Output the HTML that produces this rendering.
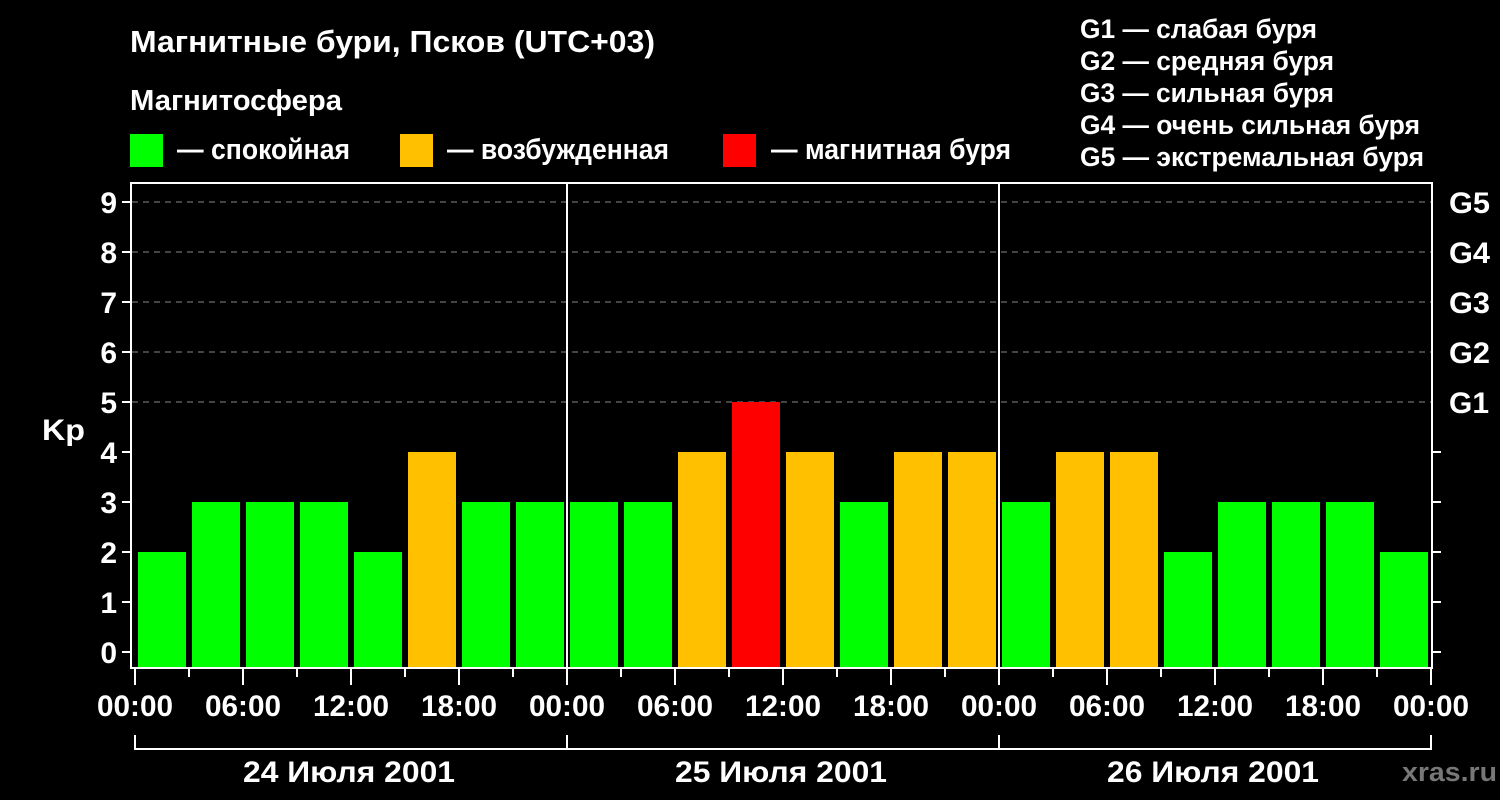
<!DOCTYPE html>
<html><head><meta charset="utf-8"><style>
html,body{margin:0;padding:0;background:#000;width:1500px;height:800px;overflow:hidden}
svg{display:block}
text{font-family:"Liberation Sans",sans-serif;font-weight:bold;fill:#fff}
</style></head><body>
<svg width="1500" height="800" viewBox="0 0 1500 800">
<text x="130" y="52" font-size="31" textLength="525" lengthAdjust="spacingAndGlyphs">Магнитные бури, Псков (UTC+03)</text>
<text x="130" y="110" font-size="29" textLength="212" lengthAdjust="spacingAndGlyphs">Магнитосфера</text>
<rect x="130" y="134" width="33" height="33" fill="#00ff00"/>
<text x="177" y="159" font-size="29" textLength="173" lengthAdjust="spacingAndGlyphs">— спокойная</text>
<rect x="400" y="134" width="33" height="33" fill="#ffc000"/>
<text x="447" y="159" font-size="29" textLength="222" lengthAdjust="spacingAndGlyphs">— возбужденная</text>
<rect x="723" y="134" width="33" height="33" fill="#ff0000"/>
<text x="771" y="159" font-size="29" textLength="240" lengthAdjust="spacingAndGlyphs">— магнитная буря</text>
<g font-size="27">
<text x="1080" y="38" textLength="237" lengthAdjust="spacingAndGlyphs">G1 — слабая буря</text>
<text x="1080" y="70" textLength="254" lengthAdjust="spacingAndGlyphs">G2 — средняя буря</text>
<text x="1080" y="102" textLength="254" lengthAdjust="spacingAndGlyphs">G3 — сильная буря</text>
<text x="1080" y="134" textLength="340" lengthAdjust="spacingAndGlyphs">G4 — очень сильная буря</text>
<text x="1080" y="166" textLength="344" lengthAdjust="spacingAndGlyphs">G5 — экстремальная буря</text>
</g>
<g stroke="#888" stroke-width="1" stroke-dasharray="6,5">
<line x1="132" y1="202" x2="1432" y2="202"/>
<line x1="132" y1="252" x2="1432" y2="252"/>
<line x1="132" y1="302" x2="1432" y2="302"/>
<line x1="132" y1="352" x2="1432" y2="352"/>
<line x1="132" y1="402" x2="1432" y2="402"/>
</g>
<g id="bars"></g>
<line x1="567" y1="183" x2="567" y2="668" stroke="#fff" stroke-width="2"/>
<line x1="999" y1="183" x2="999" y2="668" stroke="#fff" stroke-width="2"/>
<rect x="131" y="183" width="1301" height="485" fill="none" stroke="#fff" stroke-width="2"/>
<g id="ticks" stroke="#fff" stroke-width="2"></g>
<g font-size="30" text-anchor="end">
<text x="117" y="663">0</text><text x="117" y="613">1</text><text x="117" y="563">2</text><text x="117" y="513">3</text><text x="117" y="463">4</text><text x="117" y="413">5</text><text x="117" y="363">6</text><text x="117" y="313">7</text><text x="117" y="263">8</text><text x="117" y="213">9</text>
</g>
<text x="42" y="440" font-size="30" textLength="43" lengthAdjust="spacingAndGlyphs">Kp</text>
<g font-size="30">
<text x="1449" y="413" textLength="40" lengthAdjust="spacingAndGlyphs">G1</text><text x="1449" y="363" textLength="41" lengthAdjust="spacingAndGlyphs">G2</text><text x="1449" y="313" textLength="41" lengthAdjust="spacingAndGlyphs">G3</text><text x="1449" y="263" textLength="41" lengthAdjust="spacingAndGlyphs">G4</text><text x="1449" y="213" textLength="41" lengthAdjust="spacingAndGlyphs">G5</text>
</g>
<g id="xl" font-size="30"></g>
<path d="M135 735V749H1431V735M567 735V749M999 735V749" stroke="#fff" stroke-width="2" fill="none"/>
<g font-size="30">
<text x="243" y="782" textLength="212" lengthAdjust="spacingAndGlyphs">24 Июля 2001</text>
<text x="675" y="782" textLength="212" lengthAdjust="spacingAndGlyphs">25 Июля 2001</text>
<text x="1107" y="782" textLength="212" lengthAdjust="spacingAndGlyphs">26 Июля 2001</text>
</g>
<text x="1402" y="781" font-size="27" textLength="95" lengthAdjust="spacingAndGlyphs" style="fill:#777">xras.ru</text>
</svg>
<script>
var v=[2,3,3,3,2,4,3,3,3,3,4,5,4,3,4,4,3,4,4,2,3,3,3,2];
var ns="http://www.w3.org/2000/svg",b=document.getElementById('bars');
v.forEach(function(k,i){var r=document.createElementNS(ns,'rect');var top=652-50*k;
r.setAttribute('x',138+54*i);r.setAttribute('y',top);r.setAttribute('width',48);r.setAttribute('height',667-top);
r.setAttribute('fill',k>=5?'#ff0000':k==4?'#ffc000':'#00ff00');b.appendChild(r);});
var t=document.getElementById('ticks'),s='';
for(var k=0;k<10;k++){var y=652-50*k;s+='M122 '+y+'H131';if(k<5)s+='M1432 '+y+'H1441';}
for(var h=0;h<=24;h++){var x=135+54*h;s+='M'+x+' 668V'+(h%2==0?685:677);}
var p=document.createElementNS(ns,'path');p.setAttribute('d',s);t.appendChild(p);
var xl=document.getElementById('xl'),lab=['00:00','06:00','12:00','18:00'];
for(var j=0;j<=12;j++){var tx=document.createElementNS(ns,'text');tx.setAttribute('x',135+108*j-38);tx.setAttribute('y',716);tx.setAttribute('textLength',76);tx.setAttribute('lengthAdjust','spacingAndGlyphs');tx.textContent=lab[j%4];xl.appendChild(tx);}
</script>
</body></html>
